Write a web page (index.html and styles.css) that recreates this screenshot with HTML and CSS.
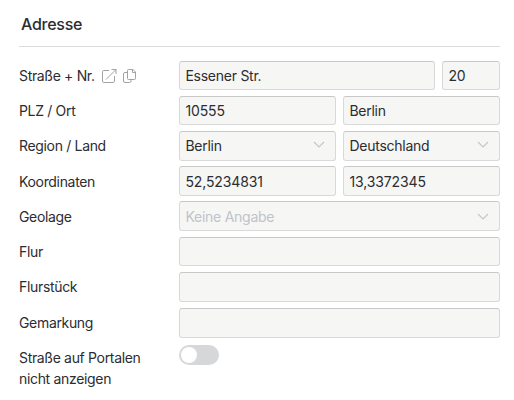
FILE: index.html
```html
<!DOCTYPE html>
<html lang="de">
<head>
<meta charset="utf-8">
<title>Adresse</title>
<link rel="stylesheet" href="styles.css">
</head>
<body>
<section class="panel">
  <h2 class="title">Adresse</h2>
  <div class="form">
    <div class="label"><span class="with-icons">Straße + Nr.</span>
      <svg class="icon open" width="15" height="15" viewBox="0 0 15 15"><path d="M7 1.500H1.800a1.300 1.300 0 0 0-1.300 1.300V12.200a1.300 1.300 0 0 0 1.300 1.300H11.200a1.300 1.300 0 0 0 1.300-1.300V7M4 10.500L14 .5M9.500 .5h4.500v4.500"/></svg>
      <svg class="icon copy" width="14" height="15" viewBox="0 0 14 15"><path d="M5.500 .5H10l2.500 2.500V9.500a1 1 0 0 1-1 1h-6a1 1 0 0 1-1-1V1.500a1 1 0 0 1 1-1zM9.500 .5v3h3M4.500 3.500H2a1.500 1.500 0 0 0-1.500 1.500v7a1.500 1.500 0 0 0 1.500 1.500H6.500a1.500 1.500 0 0 0 1.500-1.500v-1.500"/></svg>
    </div>
    <div class="fields street short"><div class="field">Essener Str.</div><div class="field number">20</div></div>

    <div class="label">PLZ / Ort</div>
    <div class="fields pair short"><div class="field number">10555</div><div class="field">Berlin</div></div>

    <div class="label">Region / Land</div>
    <div class="fields pair">
      <div class="field select">Berlin<svg class="chevron" width="12" height="8" viewBox="0 0 12 8"><path d="M1 1l5 5 5-5"/></svg></div>
      <div class="field select">Deutschland<svg class="chevron" width="12" height="8" viewBox="0 0 12 8"><path d="M1 1l5 5 5-5"/></svg></div>
    </div>

    <div class="label low">Koordinaten</div>
    <div class="fields pair"><div class="field number low">52,5234831</div><div class="field number low">13,3372345</div></div>

    <div class="label low">Geolage</div>
    <div class="fields"><div class="field select low placeholder">Keine Angabe<svg class="chevron" width="12" height="8" viewBox="0 0 12 8"><path d="M1 1l5 5 5-5"/></svg></div></div>

    <div class="label">Flur</div>
    <div class="fields short"><div class="field"></div></div>

    <div class="label">Flurstück</div>
    <div class="fields"><div class="field"></div></div>

    <div class="label">Gemarkung</div>
    <div class="fields"><div class="field"></div></div>

    <div class="label multiline">Straße auf Portalen nicht anzeigen</div>
    <div class="toggle"><span class="knob"></span></div>
  </div>
</section>
</body>
</html>
```
FILE: styles.css
```css
* { box-sizing: border-box; }
body {
  margin: 0;
  background: #fff;
  color: #2b2d30;
  font: 14px/20px Inter, "Liberation Sans", sans-serif;
}
.panel { padding: 0 14px 0 19px; }
.title {
  height: 47px;
  margin: 0 0 14px;
  padding: 13px 0 0 2px;
  border-bottom: 1px solid #dcdcdc;
  font-size: 16px;
  line-height: 22px;
  font-weight: 500;
  letter-spacing: -0.27px;
}
.form {
  display: grid;
  grid-template-columns: 160px 1fr;
  grid-template-rows: 35px 35px 35px 35px 36px 35px 36px 37px 50px;
  align-items: start;
}
.label {
  display: flex;
  align-items: flex-start;
  height: 30px;
  padding-top: 5px;
  letter-spacing: -0.33px;
}
.label.low { padding-top: 6px; }
.label.multiline {
  display: block;
  width: 130px;
  height: auto;
  padding-top: 2px;
  line-height: 21px;
}
.with-icons { width: 76px; white-space: nowrap; }
.icon {
  margin-top: 3px;
  fill: none;
  stroke: #97999b;
  stroke-width: 0.9;
  stroke-linejoin: round;
}
.open { margin-left: 7px; }
.copy { margin-left: 6px; }
.fields { display: grid; height: 30px; column-gap: 7px; }
.fields.short { height: 29px; }
.street { grid-template-columns: 1fr 58px; }
.pair { grid-template-columns: 1fr 1fr; }
.field {
  display: flex;
  align-items: flex-start;
  padding: 4px 5.4px 0;
  border: 1px solid #d9d9d9;
  border-top-color: #c8c8c8;
  border-radius: 3px;
  background: #f6f6f5;
  letter-spacing: -0.25px;
}
.field.low { padding-top: 5px; }
.field.number { letter-spacing: -0.12px; }
.field.select { justify-content: space-between; padding-right: 10.5px; }
.field.placeholder { color: #bfc3ca; }
.chevron { margin-top: 5px; fill: none; stroke: #c4c6ca; stroke-width: 1.1; }
.low .chevron { margin-top: 6px; }
.toggle {
  display: flex;
  width: 40px;
  height: 20px;
  padding: 2px;
  border-radius: 10px;
  background: #d6d7d9;
}
.knob { width: 16px; height: 16px; border-radius: 50%; background: #fff; }
```
